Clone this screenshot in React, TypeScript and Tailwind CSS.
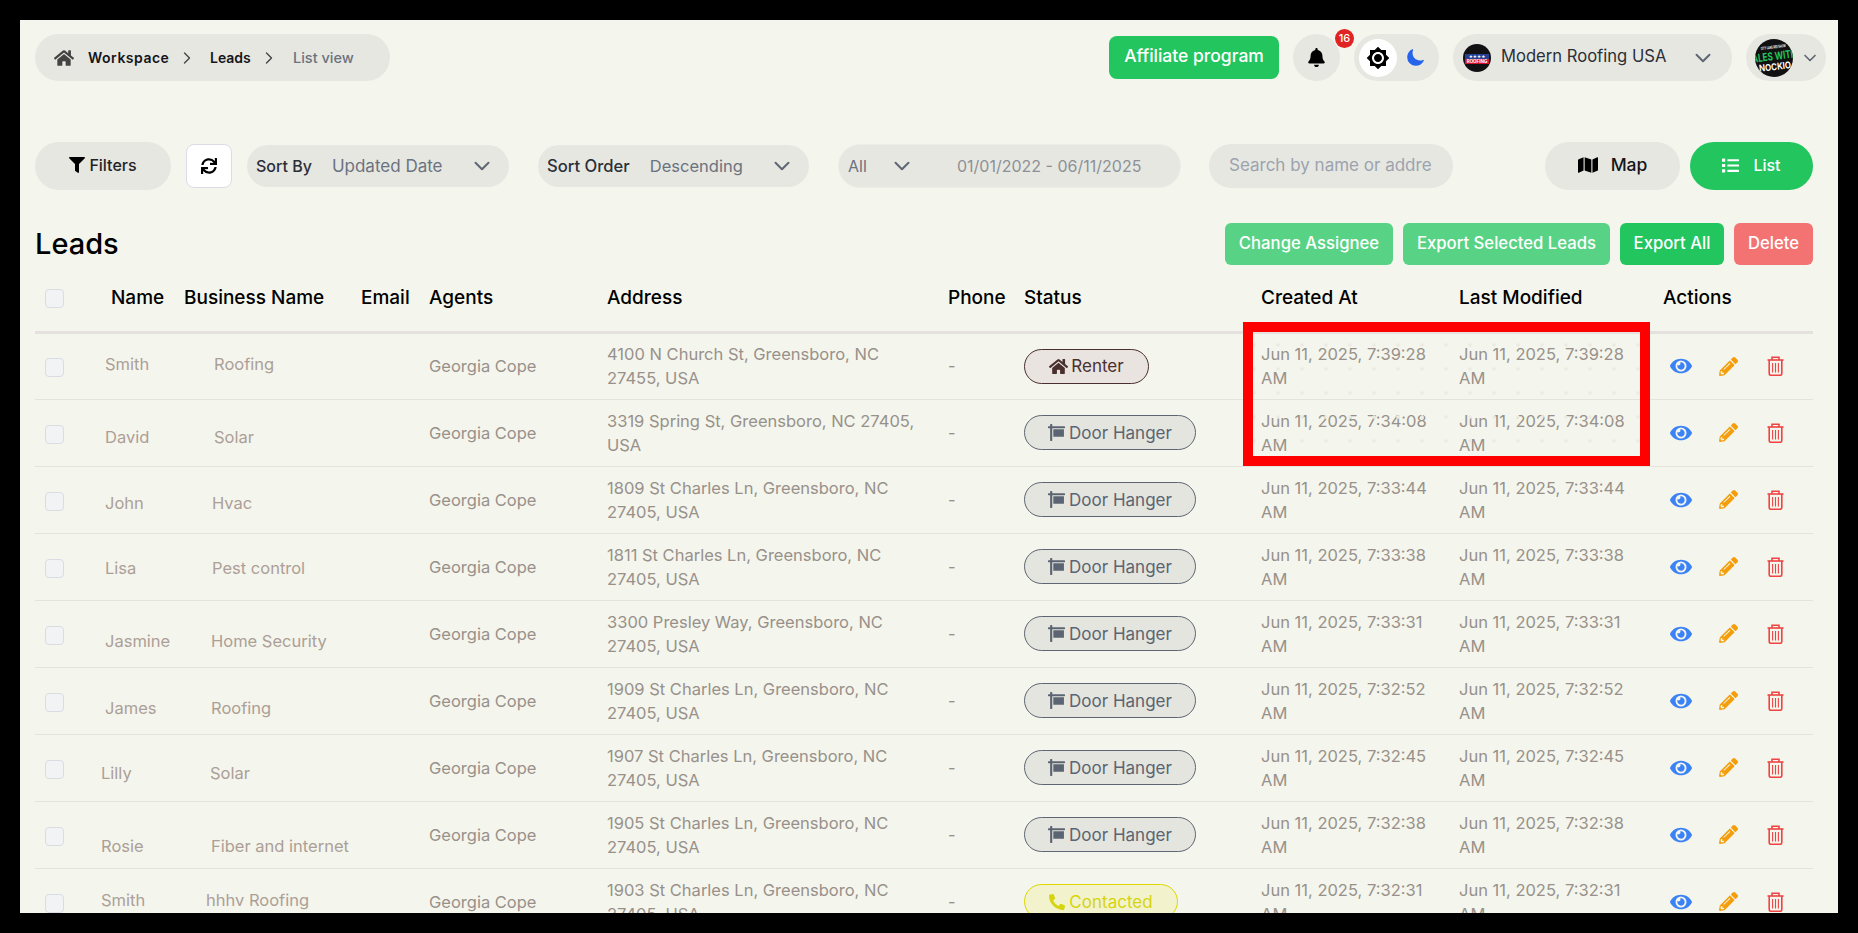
import {
  FaBell, FaEye, FaFilter, FaHome, FaList, FaMap, FaPencilAlt, FaPhoneAlt, FaSign, FaSync,
} from "react-icons/fa";
import { FiChevronDown, FiChevronRight } from "react-icons/fi";
import { IoMoon } from "react-icons/io5";
import { MdBrightness7 } from "react-icons/md";

type Lead = {
  name: string;
  nameCls: string;
  biz: string;
  bizCls: string;
  addr: [string, string];
  created: string;
  status: "renter" | "door" | "contacted";
};

const leads: Lead[] = [
  { name: "Smith", nameCls: "pl-[5px] pb-[4px]", biz: "Roofing", bizCls: "pl-[30px] pb-[4px]", addr: ["4100 N Church St, Greensboro, NC", "27455, USA"], created: "7:39:28", status: "renter" },
  { name: "David", nameCls: "pl-[5px] pt-[8px]", biz: "Solar", bizCls: "pl-[30px] pt-[8px]", addr: ["3319 Spring St, Greensboro, NC 27405,", "USA"], created: "7:34:08", status: "door" },
  { name: "John", nameCls: "pl-[5px] pt-[6px]", biz: "Hvac", bizCls: "pl-[28px] pt-[6px]", addr: ["1809 St Charles Ln, Greensboro, NC", "27405, USA"], created: "7:33:44", status: "door" },
  { name: "Lisa", nameCls: "pl-[5px] pt-[2px]", biz: "Pest control", bizCls: "pl-[28px] pt-[2px]", addr: ["1811 St Charles Ln, Greensboro, NC", "27405, USA"], created: "7:33:38", status: "door" },
  { name: "Jasmine", nameCls: "pl-[5px] pt-[14px]", biz: "Home Security", bizCls: "pl-[27px] pt-[14px]", addr: ["3300 Presley Way, Greensboro, NC", "27405, USA"], created: "7:33:31", status: "door" },
  { name: "James", nameCls: "pl-[5px] pt-[14px]", biz: "Roofing", bizCls: "pl-[27px] pt-[14px]", addr: ["1909 St Charles Ln, Greensboro, NC", "27405, USA"], created: "7:32:52", status: "door" },
  { name: "Lilly", nameCls: "pl-[1px] pt-[10px]", biz: "Solar", bizCls: "pl-[26px] pt-[10px]", addr: ["1907 St Charles Ln, Greensboro, NC", "27405, USA"], created: "7:32:45", status: "door" },
  { name: "Rosie", nameCls: "pl-[1px] pt-[22px]", biz: "Fiber and internet", bizCls: "pl-[27px] pt-[22px]", addr: ["1905 St Charles Ln, Greensboro, NC", "27405, USA"], created: "7:32:38", status: "door" },
  { name: "Smith", nameCls: "pl-[1px] pb-[4px]", biz: "hhhv Roofing", bizCls: "pl-[22px] pb-[4px]", addr: ["1903 St Charles Ln, Greensboro, NC", "27405, USA"], created: "7:32:31", status: "contacted" },
];

function StatusBadge({ status }: { status: Lead["status"] }) {
  if (status === "renter") {
    return (
      <span className="inline-flex h-[35px] w-[125px] items-center justify-center gap-[3px] rounded-full border border-[#4a2f2f] bg-[#e9e4df] text-[17px] text-[#4a2f2f]">
        <FaHome size={19} />
        Renter
      </span>
    );
  }
  if (status === "contacted") {
    return (
      <span className="inline-flex h-[35px] w-[154px] items-center justify-center gap-[4px] rounded-full border border-[#dcd800] bg-[#f2f3cd] text-[17px] text-[#d6d40f]">
        <FaPhoneAlt size={16} />
        Contacted
      </span>
    );
  }
  return (
    <span className="inline-flex h-[35px] w-[172px] items-center justify-center gap-[4px] rounded-full border border-[#5f6673] bg-[#e4e5de] text-[17px] text-[#5b6472]">
      <FaSign size={17} />
      Door Hanger
    </span>
  );
}

function Checkbox() {
  return <span className="block h-[19px] w-[19px] rounded-[4px] border border-[#d9dce3] bg-[#f1f3f4]" />;
}

function TrashIcon() {
  return (
    <svg width="17" height="20" viewBox="0 0 17 20" fill="none" stroke="#ef4444" strokeWidth="1.6" className="ml-[29px]">
      <path d="M0.5 4h16" />
      <path d="M5 4V1.2h7V4" />
      <path d="M2.2 4v13.5a1.8 1.8 0 0 0 1.8 1.8h9a1.8 1.8 0 0 0 1.8-1.8V4" />
      <path d="M5.6 7v9.5M8.5 7v9.5M11.4 7v9.5" strokeWidth="1.1" />
    </svg>
  );
}

function CompanyLogo() {
  return (
    <svg width="28" height="28" viewBox="0 0 28 28" className="shrink-0">
      <circle cx="14" cy="14" r="14" fill="#111114" />
      <rect x="2" y="10" width="24" height="5" fill="#27408f" />
      <rect x="2" y="15" width="24" height="5" fill="#d3152b" />
      <text x="14" y="19" textAnchor="middle" fontSize="4.5" fontWeight="700" fill="#fff">ROOFING</text>
      <text x="14" y="14" textAnchor="middle" fontSize="4" fontWeight="700" fill="#fff">★★★★</text>
    </svg>
  );
}

function Avatar() {
  return (
    <svg width="38" height="38" viewBox="0 0 38 38" className="shrink-0">
      <defs>
        <clipPath id="av">
          <circle cx="19" cy="19" r="19" />
        </clipPath>
      </defs>
      <g clipPath="url(#av)">
        <rect width="38" height="38" fill="#111111" />
        <g transform="rotate(-7 19 19)" fontWeight="700">
          <text x="7" y="9.5" fontSize="4" fill="#fff" textLength="25" lengthAdjust="spacingAndGlyphs">CITY LAKE RED SHOW</text>
          <text x="-8" y="21" fontSize="11" fill="#22c55e" textLength="50" lengthAdjust="spacingAndGlyphs">SALES WITH</text>
          <text x="3" y="31" fontSize="9.5" fill="#fff" textLength="32" lengthAdjust="spacingAndGlyphs">NOCKIO</text>
        </g>
      </g>
    </svg>
  );
}

export default function App() {
  return (
    <div className="h-[933px] w-[1858px] overflow-hidden bg-black p-[20px] font-['Inter',sans-serif]">
      <div className="relative h-[893px] overflow-hidden bg-[#f4f5ec] pl-[15px] pr-[25px] pt-[14px]">
        {/* top bar */}
        <header className="mr-[-13px] flex h-[47px] items-center">
          <nav className="flex h-[47px] w-[355px] items-center whitespace-nowrap rounded-full bg-[#e6e7e1] pl-[19px] text-[14px] font-semibold text-[#15151a]">
            <FaHome size={20} className="text-[#444]" />
            <span className="ml-[14px] w-[81px] tracking-[0.5px]">Workspace</span>
            <FiChevronRight size={20} strokeWidth={1.6} className="ml-[8px] text-[#444]" />
            <span className="ml-[13px] w-[41px]">Leads</span>
            <FiChevronRight size={20} strokeWidth={1.6} className="ml-[8px] text-[#444]" />
            <span className="ml-[14px] text-[14.5px] font-medium text-[#6b7280]">List view</span>
          </nav>
          <button className="ml-auto flex h-[43px] w-[170px] items-center justify-center rounded-lg bg-[#22c55e] pb-[2px] text-[17.5px] font-medium text-white">
            Affiliate program
          </button>
          <div className="relative ml-[14px] flex h-[47px] w-[47px] items-center justify-center rounded-full bg-[#e6e7e1]">
            <FaBell size={19} className="text-black" />
            <span className="absolute right-[-14px] top-[-5px] flex h-[19px] w-[19px] items-center justify-center rounded-full bg-[#e02424] text-[11px] font-medium text-white">
              16
            </span>
          </div>
          <div className="ml-[14px] flex h-[47px] w-[85px] items-center rounded-full bg-[#e6e7e1] pl-[5px]">
            <span className="flex h-[38px] w-[38px] items-center justify-center rounded-full bg-white">
              <MdBrightness7 size={24} className="text-black" />
            </span>
            <IoMoon size={19} className="ml-[9px] text-[#2563eb]" />
          </div>
          <div className="ml-[14px] flex h-[47px] w-[279px] items-center rounded-full bg-[#e6e7e1] pl-[10px] text-[#2b2f38]">
            <CompanyLogo />
            <span className="ml-[10px] pb-[2px] text-[16.6px]">Modern Roofing USA</span>
            <FiChevronDown size={26} strokeWidth={1.8} className="ml-auto mr-[16px] text-[#5f6673]" />
          </div>
          <div className="ml-[14px] flex h-[47px] w-[80px] items-center rounded-full bg-[#e6e7e1] pl-[9px]">
            <Avatar />
            <FiChevronDown size={20} strokeWidth={2} className="ml-[7px] text-[#5f6673]" />
          </div>
        </header>

        {/* filters */}
        <div className="mt-[61px] flex h-[48px] items-center">
          <button className="flex h-[48px] w-[136px] items-center justify-center gap-[4px] rounded-full bg-[#e6e7e1] pb-[2px] text-[16px] font-medium text-[#1f2328]">
            <FaFilter size={16} className="text-black" />
            Filters
          </button>
          <button className="ml-[15px] flex h-[44px] w-[46px] items-center justify-center rounded-lg border border-[#dcdce6] bg-white">
            <FaSync size={16} className="text-black" />
          </button>
          <div className="ml-[15px] flex h-[42px] w-[262px] items-center rounded-full bg-[#e6e7e1] pb-[1px] pl-[9px] leading-[24px]">
            <span className="text-[16px] font-medium text-[#2b2f38]">Sort By</span>
            <span className="ml-[20px] text-[17px] text-[#6b7280]">Updated Date</span>
            <FiChevronDown size={26} strokeWidth={1.8} className="ml-auto mr-[14px] text-[#5f6673]" />
          </div>
          <div className="ml-[29px] flex h-[42px] w-[271px] items-center rounded-full bg-[#e6e7e1] pb-[1px] pl-[9px] leading-[24px]">
            <span className="text-[16.6px] font-medium text-[#2b2f38]">Sort Order</span>
            <span className="ml-[20px] text-[16.5px] text-[#6b7280]">Descending</span>
            <FiChevronDown size={26} strokeWidth={1.8} className="ml-auto mr-[14px] text-[#5f6673]" />
          </div>
          <div className="ml-[29px] flex h-[44px] w-[343px] items-center rounded-full border border-[#eceee5] bg-[#e6e7e1] pb-[1px] pl-[9px] text-[16px] text-[#6b7280]">
            <span className="w-[41px]">All</span>
            <FiChevronDown size={26} strokeWidth={1.8} className="text-[#5f6673]" />
            <span className="ml-[42px] text-[#8d9096]">01/01/2022 - 06/11/2025</span>
          </div>
          <div className="ml-[28px] flex h-[44px] w-[244px] items-center overflow-hidden rounded-full bg-[#e6e7e1] pl-[20px] pr-[20px] text-[17px] text-[#9ca3af]">
            <span className="overflow-hidden whitespace-nowrap">Search by name or addre</span>
          </div>
          <button className="ml-auto flex h-[48px] w-[135px] items-center justify-center gap-[13px] rounded-full bg-[#e6e7e1] pb-[2px] text-[17.5px] font-medium text-[#15151a]">
            <FaMap size={20} className="text-black" />
            Map
          </button>
          <button className="ml-[10px] flex h-[48px] w-[123px] items-center justify-center gap-[14px] rounded-full bg-[#22c55e] pb-[2px] text-[16px] font-medium text-white">
            <FaList size={17} />
            List
          </button>
        </div>

        {/* title + bulk actions */}
        <div className="mt-[33px] flex h-[42px] items-center">
          <h1 className="pb-[1px] text-[29px] font-medium text-black">Leads</h1>
          <div className="ml-auto flex gap-[10px] text-[16.7px] font-medium text-white">
            <button className="h-[42px] w-[168px] rounded-md bg-[#58d385]">Change Assignee</button>
            <button className="h-[42px] w-[207px] rounded-md bg-[#58d385]">Export Selected Leads</button>
            <button className="h-[42px] w-[104px] rounded-md bg-[#22c55e]">Export All</button>
            <button className="h-[42px] w-[79px] rounded-md bg-[#f37373]">Delete</button>
          </div>
        </div>

        {/* table */}
        <table className="w-[1778px] table-fixed border-collapse text-[16.5px]">
          <colgroup>
            <col className="w-[65px]" />
            <col className="w-[84px]" />
            <col className="w-[177px]" />
            <col className="w-[68px]" />
            <col className="w-[178px]" />
            <col className="w-[341px]" />
            <col className="w-[76px]" />
            <col className="w-[237px]" />
            <col className="w-[198px]" />
            <col className="w-[204px]" />
            <col className="w-[150px]" />
          </colgroup>
          <thead>
            <tr className="h-[67px] border-b-[3px] border-[#e5e1de] text-left text-[19px] text-black">
              <th className="pt-[1px] pl-[10px] font-medium"><Checkbox /></th>
              <th className="pt-[1px] pl-[11px] font-medium">Name</th>
              <th className="pt-[1px] font-medium">Business Name</th>
              <th className="pt-[1px] font-medium">Email</th>
              <th className="pt-[1px] font-medium">Agents</th>
              <th className="pt-[1px] font-medium">Address</th>
              <th className="pt-[1px] font-medium">Phone</th>
              <th className="pt-[1px] font-medium">Status</th>
              <th className="pt-[1px] font-medium">Created At</th>
              <th className="pt-[1px] font-medium">Last Modified</th>
              <th className="pt-[1px] font-medium">Actions</th>
            </tr>
          </thead>
          <tbody className="leading-[24px] text-[#98918b]">
            {leads.map((l, i) => (
              <tr key={i} className="h-[67px] border-b border-[#e4e4dd]">
                <td className="pl-[10px] pt-[3px]"><Checkbox /></td>
                <td className={`whitespace-nowrap text-[#ac9f97] ${l.nameCls}`}>{l.name}</td>
                <td className={`whitespace-nowrap text-[#ac9f97] ${l.bizCls}`}>{l.biz}</td>
                <td />
                <td>Georgia Cope</td>
                <td className="whitespace-nowrap">{l.addr[0]}<br />{l.addr[1]}</td>
                <td>-</td>
                <td><StatusBadge status={l.status} /></td>
                <td className="whitespace-nowrap">Jun 11, 2025, {l.created}<br />AM</td>
                <td className="whitespace-nowrap">Jun 11, 2025, {l.created}<br />AM</td>
                <td>
                  <div className="flex items-center pl-[7px]">
                    <FaEye size={22} className="text-[#3b82f6]" />
                    <FaPencilAlt size={19} className="ml-[27px] text-[#f59e0b]" />
                    <TrashIcon />
                  </div>
                </td>
              </tr>
            ))}
          </tbody>
        </table>

        {/* red annotation drawn over the date columns, with the faint dot pattern inside it */}
        <div className="absolute left-[1223px] top-[302px] h-[144px] w-[407px] border-[10px] border-[#ff0000]">
          <div className="h-full w-full bg-[radial-gradient(circle,#ebebe3_1.4px,transparent_2px)] bg-[length:24px_24px] bg-[position:-11px_1px]" />
        </div>
      </div>
    </div>
  );
}
